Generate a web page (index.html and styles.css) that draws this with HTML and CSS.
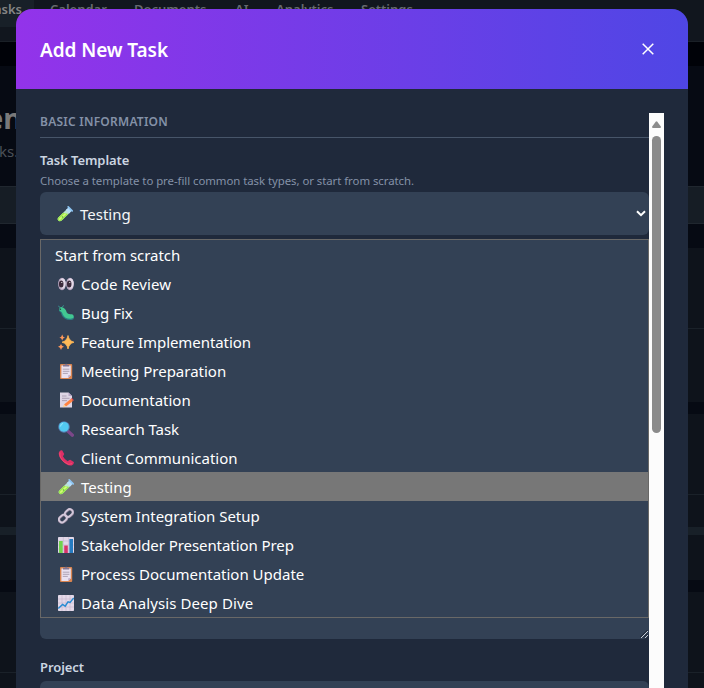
FILE: index.html
```html
<!DOCTYPE html>
<html lang="en">
<head>
<meta charset="utf-8">
<title>Add New Task</title>
<link rel="stylesheet" href="styles.css">
</head>
<body>
<svg class="defs" aria-hidden="true">
  <symbol id="i-tube" viewBox="0 0 16 16">
    <path d="M10 3 13.2 6.2 5 14.2Q3 16 1.2 14.6-.2 12.8 1.8 11Z" fill="#b9e3d0"/>
    <path d="M6 6.8 11.3 8 5 14.2Q3 16 1.2 14.6-.2 12.8 1.8 11Z" fill="#9be84c"/>
    <path d="M2.2 13.6 8.6 7.6" stroke="#d6f97c" stroke-width="1.5"/>
    <path d="m10.2 2.6 3.4 3.4" stroke="#b5dcfa" stroke-width="4"/>
    <path d="m11.2.9 4 4" stroke="#8cc4f2" stroke-width="1.7" stroke-linecap="round"/>
    <circle cx="5.5" cy="11" r=".8" fill="#54b82d"/>
  </symbol>
  <symbol id="i-eyes" viewBox="0 0 16 16">
    <ellipse cx="4" cy="8" rx="3.9" ry="6.2" fill="#b9a6c0"/><ellipse cx="12" cy="8" rx="3.9" ry="6.2" fill="#b9a6c0"/>
    <ellipse cx="4.5" cy="7.5" rx="3.1" ry="5.2" fill="#e4d9e8"/><ellipse cx="12.5" cy="7.5" rx="3.1" ry="5.2" fill="#e4d9e8"/>
    <ellipse cx="3.2" cy="8" rx="2.3" ry="3.6" fill="#3d2a3c"/><ellipse cx="11.2" cy="8" rx="2.3" ry="3.6" fill="#3d2a3c"/>
    <circle cx="3.8" cy="6.5" r=".6" fill="#fff"/><circle cx="11.8" cy="6.5" r=".6" fill="#fff"/>
  </symbol>
  <symbol id="i-bug" viewBox="0 0 16 16">
    <path d="M3.5 5Q5.5 6 6 9.2 8 13.2 13.5 12.5" fill="none" stroke="#2a7d83" stroke-width="5" stroke-linecap="round"/>
    <path d="M3.5 4.3Q6 5 6.6 8.2 8.5 12 13.5 11.4" fill="none" stroke="#42c792" stroke-width="4.4" stroke-linecap="round"/>
    <path d="M1.6 2.6.6.8M4.5 2 5.5.4" stroke="#399b99" stroke-width="1"/>
    <circle cx="2.4" cy="4.3" r=".8" fill="#214b45"/>
  </symbol>
  <symbol id="i-sparkles" viewBox="0 0 16 16">
    <path d="M10 1.5Q11 7 16 8.2 11 9.4 10 15 9 9.4 4 8.2 9 7 10 1.5Z" fill="#ffb957" stroke="#ffb957" stroke-width=".8" stroke-linejoin="round"/>
    <path d="M4.2.5Q4.6 3 7 3.5 4.6 4 4.2 6.5 3.8 4 1.4 3.5 3.8 3 4.2.5ZM3 10Q3.5 12 6 12.8 3.5 13.3 3 16 2.5 13.3 0 12.8 2.5 12 3 10Z" fill="#ff985a"/>
  </symbol>
  <symbol id="i-clip" viewBox="0 0 16 16">
    <rect x="2" y="1" width="12.2" height="15" rx="1" fill="#d88450"/>
    <path d="M3.4 2.5h9.4v9.8L10.3 15H3.4Z" fill="#e9e1f0"/>
    <path d="M12.8 12.3 10.3 15v-2.7Z" fill="#b7a6c6"/>
    <path d="M5 3.6V1.7h1.8a1.4 1.4 0 0 1 2.6 0h1.8v1.9Z" fill="#85758f"/>
    <path d="M4.8 6.2h6.6M4.8 8.3h6.6M4.8 10.4h5" stroke="#a69bae" stroke-width=".9"/>
  </symbol>
  <symbol id="i-memo" viewBox="0 0 16 16">
    <path d="M2 .5h8.5L14 4v11.5H2Z" fill="#ded5e5"/><path d="M10.5.5V4H14Z" fill="#b7a5c5"/>
    <path d="M4 4h4.5M4 6.3h7.5M4 8.6h5" stroke="#a79aaf" stroke-width=".9"/>
    <path d="m6 12.5 7-5.8 2 2.2-7 5.7Z" fill="#ff8342"/><path d="m13 6.7.9-.7 2 2.2-.9.7Z" fill="#e94b4c"/><path d="m6 12.5-1.2 2.8L8 14.6Z" fill="#ffd18c"/>
  </symbol>
  <symbol id="i-search" viewBox="0 0 16 16">
    <path d="m9.8 10 4.6 4.2" stroke="#7b4789" stroke-width="3.3" stroke-linecap="round"/>
    <circle cx="6" cy="6" r="5.8" fill="#557cb1"/><circle cx="5.9" cy="5.8" r="4.9" fill="#52c9f0"/>
    <path d="M2.4 5.5Q2.8 3 5 2.2" fill="none" stroke="#8ee5fb" stroke-width="1.2"/>
  </symbol>
  <symbol id="i-phone" viewBox="0 0 16 16">
    <path d="M1.2 1.8Q3-.2 4.3.5L6.2 4Q6 5 4.9 6.2 6.5 9.4 9.7 11.3 11 9.8 12.2 9.8L15.8 12Q16.3 14 13.7 15.4 9.7 16.6 4.1 10.6-.5 5.5 1.2 1.8Z" fill="#dd2f66"/>
    <path d="M2 2.5Q.9 7.8 6.5 12.2 11 15.8 14 13.6" fill="none" stroke="#f44e70" stroke-width=".9"/>
  </symbol>
  <symbol id="i-link" viewBox="0 0 16 16">
    <g fill="none" stroke="#7d7087" stroke-width="2.8"><rect x="6.8" y="2.2" width="8.4" height="6" rx="3" transform="rotate(-42 11 5.2)"/><rect x=".8" y="7.8" width="8.4" height="6" rx="3" transform="rotate(-42 5 10.8)"/></g>
    <g fill="none" stroke="#d3c8da" stroke-width="1.8"><rect x="6.6" y="2" width="8.4" height="6" rx="3" transform="rotate(-42 10.8 5)"/><rect x=".7" y="7.6" width="8.4" height="6" rx="3" transform="rotate(-42 4.9 10.6)"/></g>
  </symbol>
  <symbol id="i-bars" viewBox="0 0 16 16">
    <rect width="16" height="16" rx=".8" fill="#e2d8e8"/>
    <path d="M0 4h16M0 8h16M0 12h16M5.3 0v16M10.6 0v16" stroke="#c4b5cd" stroke-width=".6"/>
    <path d="M1 4h3.7v12H1Z" fill="#70d34c"/><path d="M6.2 8.5h3.6V16H6.2Z" fill="#d83369"/><path d="M11.4 2H15v14h-3.6Z" fill="#267bc1"/>
  </symbol>
  <symbol id="i-chart" viewBox="0 0 16 16">
    <rect width="16" height="16" rx=".8" fill="#e4d9e9"/>
    <path d="M0 4h16M0 8h16M0 12h16M4 0v16M8 0v16M12 0v16" stroke="#c6b6cf" stroke-width=".6"/>
    <path d="m.3 13.5 4.3-4 2.6 1.7L10 6.8l2.1.7L15.7 3" fill="none" stroke="#278bd2" stroke-width="1.4"/>
  </symbol>
</svg>

<div class="page">
  <nav class="nav">
    <span class="tab active">asks</span><span class="tab calendar">Calendar</span><span class="tab documents">Documents</span><span class="tab ai">AI</span><span class="tab analytics">Analytics</span><span class="tab">Settings</span>
  </nav>
  <div class="strip"></div>
  <main class="content">
    <header class="intro"><h1>en</h1><p>ks.</p></header>
    <div class="filters"></div>
    <section class="card first"></section>
    <section class="card second"><div class="band"></div></section>
    <section class="card third"></section>
  </main>
</div>

<div class="modal">
  <header class="modal-head">
    <h2>Add New Task</h2>
    <svg class="close" viewBox="0 0 12 12"><path d="m.7.7 10.6 10.6M11.3.7.7 11.3"/></svg>
  </header>
  <div class="modal-body">
    <form class="form">
      <h3>BASIC INFORMATION</h3>
      <label class="label">Task Template</label>
      <p class="hint">Choose a template to pre-fill common task types, or start from scratch.</p>
      <div class="select-wrap">
        <div class="select"><svg class="icon"><use href="#i-tube"/></svg><span>Testing</span><svg class="chevron" viewBox="0 0 10 7"><path d="m1 1.2 4 4 4-4"/></svg></div>
        <ul class="menu">
          <li class="scratch">Start from scratch</li>
          <li class="wider"><svg class="icon"><use href="#i-eyes"/></svg>Code Review</li>
          <li><svg class="icon"><use href="#i-bug"/></svg>Bug Fix</li>
          <li class="tighter"><svg class="icon"><use href="#i-sparkles"/></svg>Feature Implementation</li>
          <li><svg class="icon"><use href="#i-clip"/></svg>Meeting Preparation</li>
          <li><svg class="icon"><use href="#i-memo"/></svg>Documentation</li>
          <li class="tighter"><svg class="icon"><use href="#i-search"/></svg>Research Task</li>
          <li><svg class="icon"><use href="#i-phone"/></svg>Client Communication</li>
          <li class="selected"><svg class="icon"><use href="#i-tube"/></svg>Testing</li>
          <li><svg class="icon"><use href="#i-link"/></svg>System Integration Setup</li>
          <li class="tighter"><svg class="icon"><use href="#i-bars"/></svg>Stakeholder Presentation Prep</li>
          <li><svg class="icon"><use href="#i-clip"/></svg>Process Documentation Update</li>
          <li class="wider"><svg class="icon"><use href="#i-chart"/></svg>Data Analysis Deep Dive</li>
        </ul>
      </div>
      <div class="textarea"><svg class="grip" viewBox="0 0 8 8"><path class="shade" d="M0 7.5 7.5 0M4 7.5 7.5 4"/><path d="M1 8 8 1M5 8l3-3"/></svg></div>
      <label class="label">Project</label>
      <div class="select project"></div>
    </form>
    <div class="scrollbar"><svg class="arrow" viewBox="0 0 9 7"><path d="M3.7.7Q4.5-.3 5.3.7L8.8 5.6Q9.2 7 8 7H1Q-.2 7 .2 5.6Z"/></svg><div class="thumb"></div></div>
  </div>
</div>
</body>
</html>
```
FILE: styles.css
```css
* { box-sizing: border-box; }
body { margin: 0; height: 688px; overflow: hidden; background: #060a13; font-family: "Noto Sans", "Open Sans", sans-serif; }
h1, h2, h3, p, ul { margin: 0; padding: 0; }
.defs { position: absolute; width: 0; height: 0; }

.page { height: 688px; overflow: hidden; display: flex; flex-direction: column; }
.nav { height: 42px; flex: none; display: flex; background: #11161e; border-bottom: 1px solid #1a2027; color: #676a6e; font-size: 13px; font-weight: 600; line-height: 18px; }
.tab { flex: none; }
.active { width: 34px; height: 27px; background: #182028; color: #858585; display: flex; justify-content: flex-end; padding-right: 12px; margin-right: 16px; }
.calendar { width: 84px; }
.documents { width: 101px; }
.ai { width: 41px; }
.analytics { width: 85px; }
.strip { height: 24px; flex: none; background: #000208; }
.content { flex: none; }
.intro { height: 120px; padding-top: 32px; }
.intro h1 { margin-left: -14px; font-size: 29px; line-height: 40px; height: 42px; color: #797979; }
.intro p { margin-left: -1px; font-size: 15px; line-height: 22px; color: #4b5158; }
.filters { height: 38px; background: #161d25; border: solid #20272f; border-width: 1px 0; margin-bottom: 24px; }
.card { background: linear-gradient(#1a2129, #1a2129) 0 80px / 100% 1px no-repeat #0e131b; }
.first { height: 154px; margin-bottom: 12px; }
.second { height: 166px; margin-bottom: 12px; padding-top: 113px; }
.third { height: 96px; }
.band { height: 8px; background: #182028; }

.modal { position: absolute; left: 16px; top: 9px; width: 672px; height: 679px; border-radius: 16px 16px 0 0; overflow: hidden; background: #1f293b; display: flex; flex-direction: column; }
.modal-head { height: 80px; flex: none; padding: 0 34px 0 24px; display: flex; align-items: center; justify-content: space-between; background: linear-gradient(90deg, #9333ea, #4f46e5); }
.modal-head h2 { color: #fff; font-size: 19px; font-weight: 600; letter-spacing: -.08px; line-height: 28px; padding-top: 1px; }
.close { width: 12px; height: 12px; stroke: #fff; stroke-width: 1.5; fill: none; }
.modal-body { flex: 1; padding: 24px 24px 0; display: flex; min-height: 0; }
.form { width: 609px; flex: none; }
.form h3 { height: 25px; border-bottom: 1px solid #475569; color: #8491a7; font-size: 12px; font-weight: 600; line-height: 17px; letter-spacing: .24px; margin-bottom: 12px; }
.label { display: block; height: 20px; color: #cbd5e1; font-size: 13px; font-weight: 600; line-height: 20px; letter-spacing: -.08px; }
.hint { height: 22px; color: #8491a7; font-size: 11.4px; line-height: 22px; letter-spacing: -.05px; white-space: nowrap; }
.select-wrap { position: relative; }
.select { height: 43px; border-radius: 6px; background: #334155; color: #f4f6f8; font-size: 15px; display: flex; align-items: center; padding: 0 3px 0 17px; }
.select .icon { margin: 1px 7px 0 0; }
.icon { width: 16px; height: 16px; flex: none; }
.chevron { width: 10px; height: 7px; margin: 0 0 0 auto; fill: none; stroke: #fff; stroke-width: 2; }
.menu { position: absolute; left: 0; top: 47px; width: 609px; height: 379px; border: 1px solid #696867; background: #334155; list-style: none; color: #fff; font-size: 15px; }
.menu li { height: 29px; display: flex; align-items: center; padding-left: 17px; white-space: nowrap; }
.menu .scratch { padding-left: 14px; letter-spacing: -.06px; }
.menu .wider { letter-spacing: .1px; }
.menu .tighter { letter-spacing: -.07px; }
.menu .selected { background: #777; }
.menu .icon { margin: 1px 7px 0 0; }
.textarea { height: 100px; margin: 304px 0 18px; border-radius: 6px; background: #334155; display: flex; justify-content: flex-end; align-items: flex-end; padding: 1px; }
.grip { width: 8px; height: 8px; fill: none; stroke: #d9dfe6; stroke-width: .9; }
.grip .shade { stroke: #17202d; }
.project { margin-top: 4px; }
.scrollbar { width: 15px; flex: none; background: #fcfcfc; display: flex; flex-direction: column; align-items: center; padding-top: 8px; }
.arrow { width: 9px; height: 7px; fill: #8b8b8b; flex: none; }
.thumb { width: 9px; height: 297px; margin-top: 8px; border-radius: 5px; background: #8b8b8b; flex: none; }
```
